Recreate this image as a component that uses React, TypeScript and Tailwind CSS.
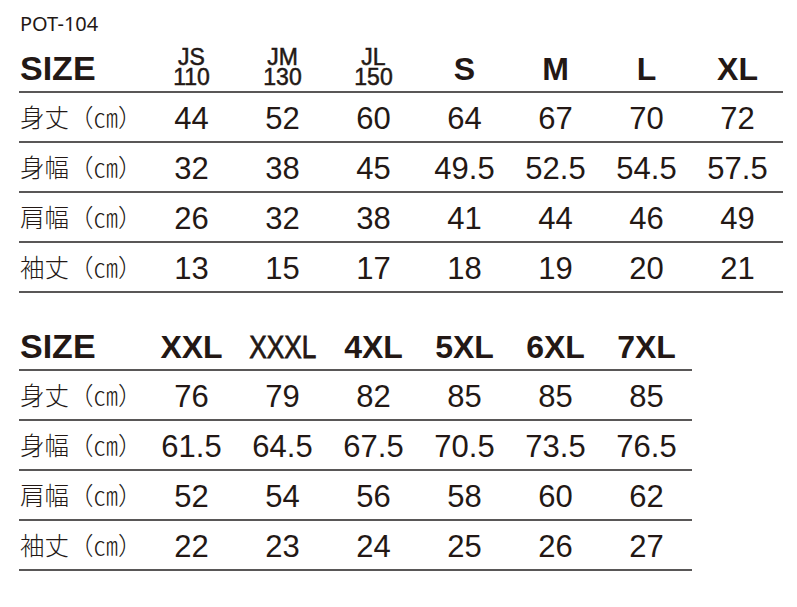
const ink = "text-[#231815]";
const num = "font-['Liberation_Sans',Arial,sans-serif]";
const jp = "font-['Noto_Sans_CJK_JP',sans-serif]";

type Head = { top?: string; bottom: string; narrow?: boolean };

const head1: Head[] = [
  { top: "JS", bottom: "110" },
  { top: "JM", bottom: "130" },
  { top: "JL", bottom: "150" },
  { bottom: "S" },
  { bottom: "M" },
  { bottom: "L" },
  { bottom: "XL" },
];

const rows1: [string, string[]][] = [
  ["身丈（㎝）", ["44", "52", "60", "64", "67", "70", "72"]],
  ["身幅（㎝）", ["32", "38", "45", "49.5", "52.5", "54.5", "57.5"]],
  ["肩幅（㎝）", ["26", "32", "38", "41", "44", "46", "49"]],
  ["袖丈（㎝）", ["13", "15", "17", "18", "19", "20", "21"]],
];

const head2: Head[] = [
  { bottom: "XXL" },
  { bottom: "XXXL", narrow: true },
  { bottom: "4XL" },
  { bottom: "5XL" },
  { bottom: "6XL" },
  { bottom: "7XL" },
];

const rows2: [string, string[]][] = [
  ["身丈（㎝）", ["76", "79", "82", "85", "85", "85"]],
  ["身幅（㎝）", ["61.5", "64.5", "67.5", "70.5", "73.5", "76.5"]],
  ["肩幅（㎝）", ["52", "54", "56", "58", "60", "62"]],
  ["袖丈（㎝）", ["22", "23", "24", "25", "26", "27"]],
];

function HeadCell({ h, tall }: { h: Head; tall: boolean }) {
  const height = tall ? "h-[58px]" : "h-[50px]";
  if (h.top) {
    return (
      <div className={`${height} flex flex-col items-center justify-end pb-[4px] border-b-2 border-[#595757]`}>
        <span className="text-[23px] leading-[20px] [-webkit-text-stroke:0.5px_#231815]">{h.top}</span>
        <span className="text-[23px] leading-[20px] [-webkit-text-stroke:0.5px_#231815]">{h.bottom}</span>
      </div>
    );
  }
  return (
    <div className={`${height} flex items-end justify-center pb-[6px] border-b-2 border-[#595757]`}>
      {h.narrow ? (
        <span className="inline-block text-[32px] leading-none scale-x-[0.82] [-webkit-text-stroke:0.8px_#231815]">
          {h.bottom}
        </span>
      ) : (
        <span className="text-[32px] leading-none font-bold">{h.bottom}</span>
      )}
    </div>
  );
}

function SizeTable({ heads, rows, tall }: { heads: Head[]; rows: [string, string[]][]; tall: boolean }) {
  const cols = heads.length === 7 ? "grid-cols-[127px_repeat(7,91px)]" : "grid-cols-[127px_repeat(6,91px)]";
  return (
    <div className={`grid ${cols} ${ink} ${num}`}>
      <div
        className={`${tall ? "h-[58px]" : "h-[50px]"} flex items-end pl-[1px] pb-[6px] border-b-2 border-[#595757]`}
      >
        <span className="text-[34px] leading-none font-bold">SIZE</span>
      </div>
      {heads.map((h) => (
        <HeadCell key={h.bottom} h={h} tall={tall} />
      ))}
      {rows.map(([label, vals]) => (
        <>
          <div
            key={label}
            className={`h-[50px] flex items-center pl-[1px] border-b-2 border-[#595757] ${jp} font-light text-[24.5px] leading-none`}
          >
            {label}
          </div>
          {vals.map((v, i) => (
            <div
              key={label + i}
              className="h-[50px] flex items-center justify-center pt-[2px] border-b-2 border-[#595757] text-[31px] leading-none"
            >
              {v}
            </div>
          ))}
        </>
      ))}
    </div>
  );
}

export default function App() {
  return (
    <div className="w-[797px] h-[607px] bg-white pl-[19px] pt-[11px]">
      <div className={`h-[24px] pl-[1px] text-[20px] leading-[26px] ${ink} font-['Noto_Sans',sans-serif]`}>POT-104</div>
      <SizeTable heads={head1} rows={rows1} tall />
      <div className="mt-[28px]">
        <SizeTable heads={head2} rows={rows2} tall={false} />
      </div>
    </div>
  );
}
